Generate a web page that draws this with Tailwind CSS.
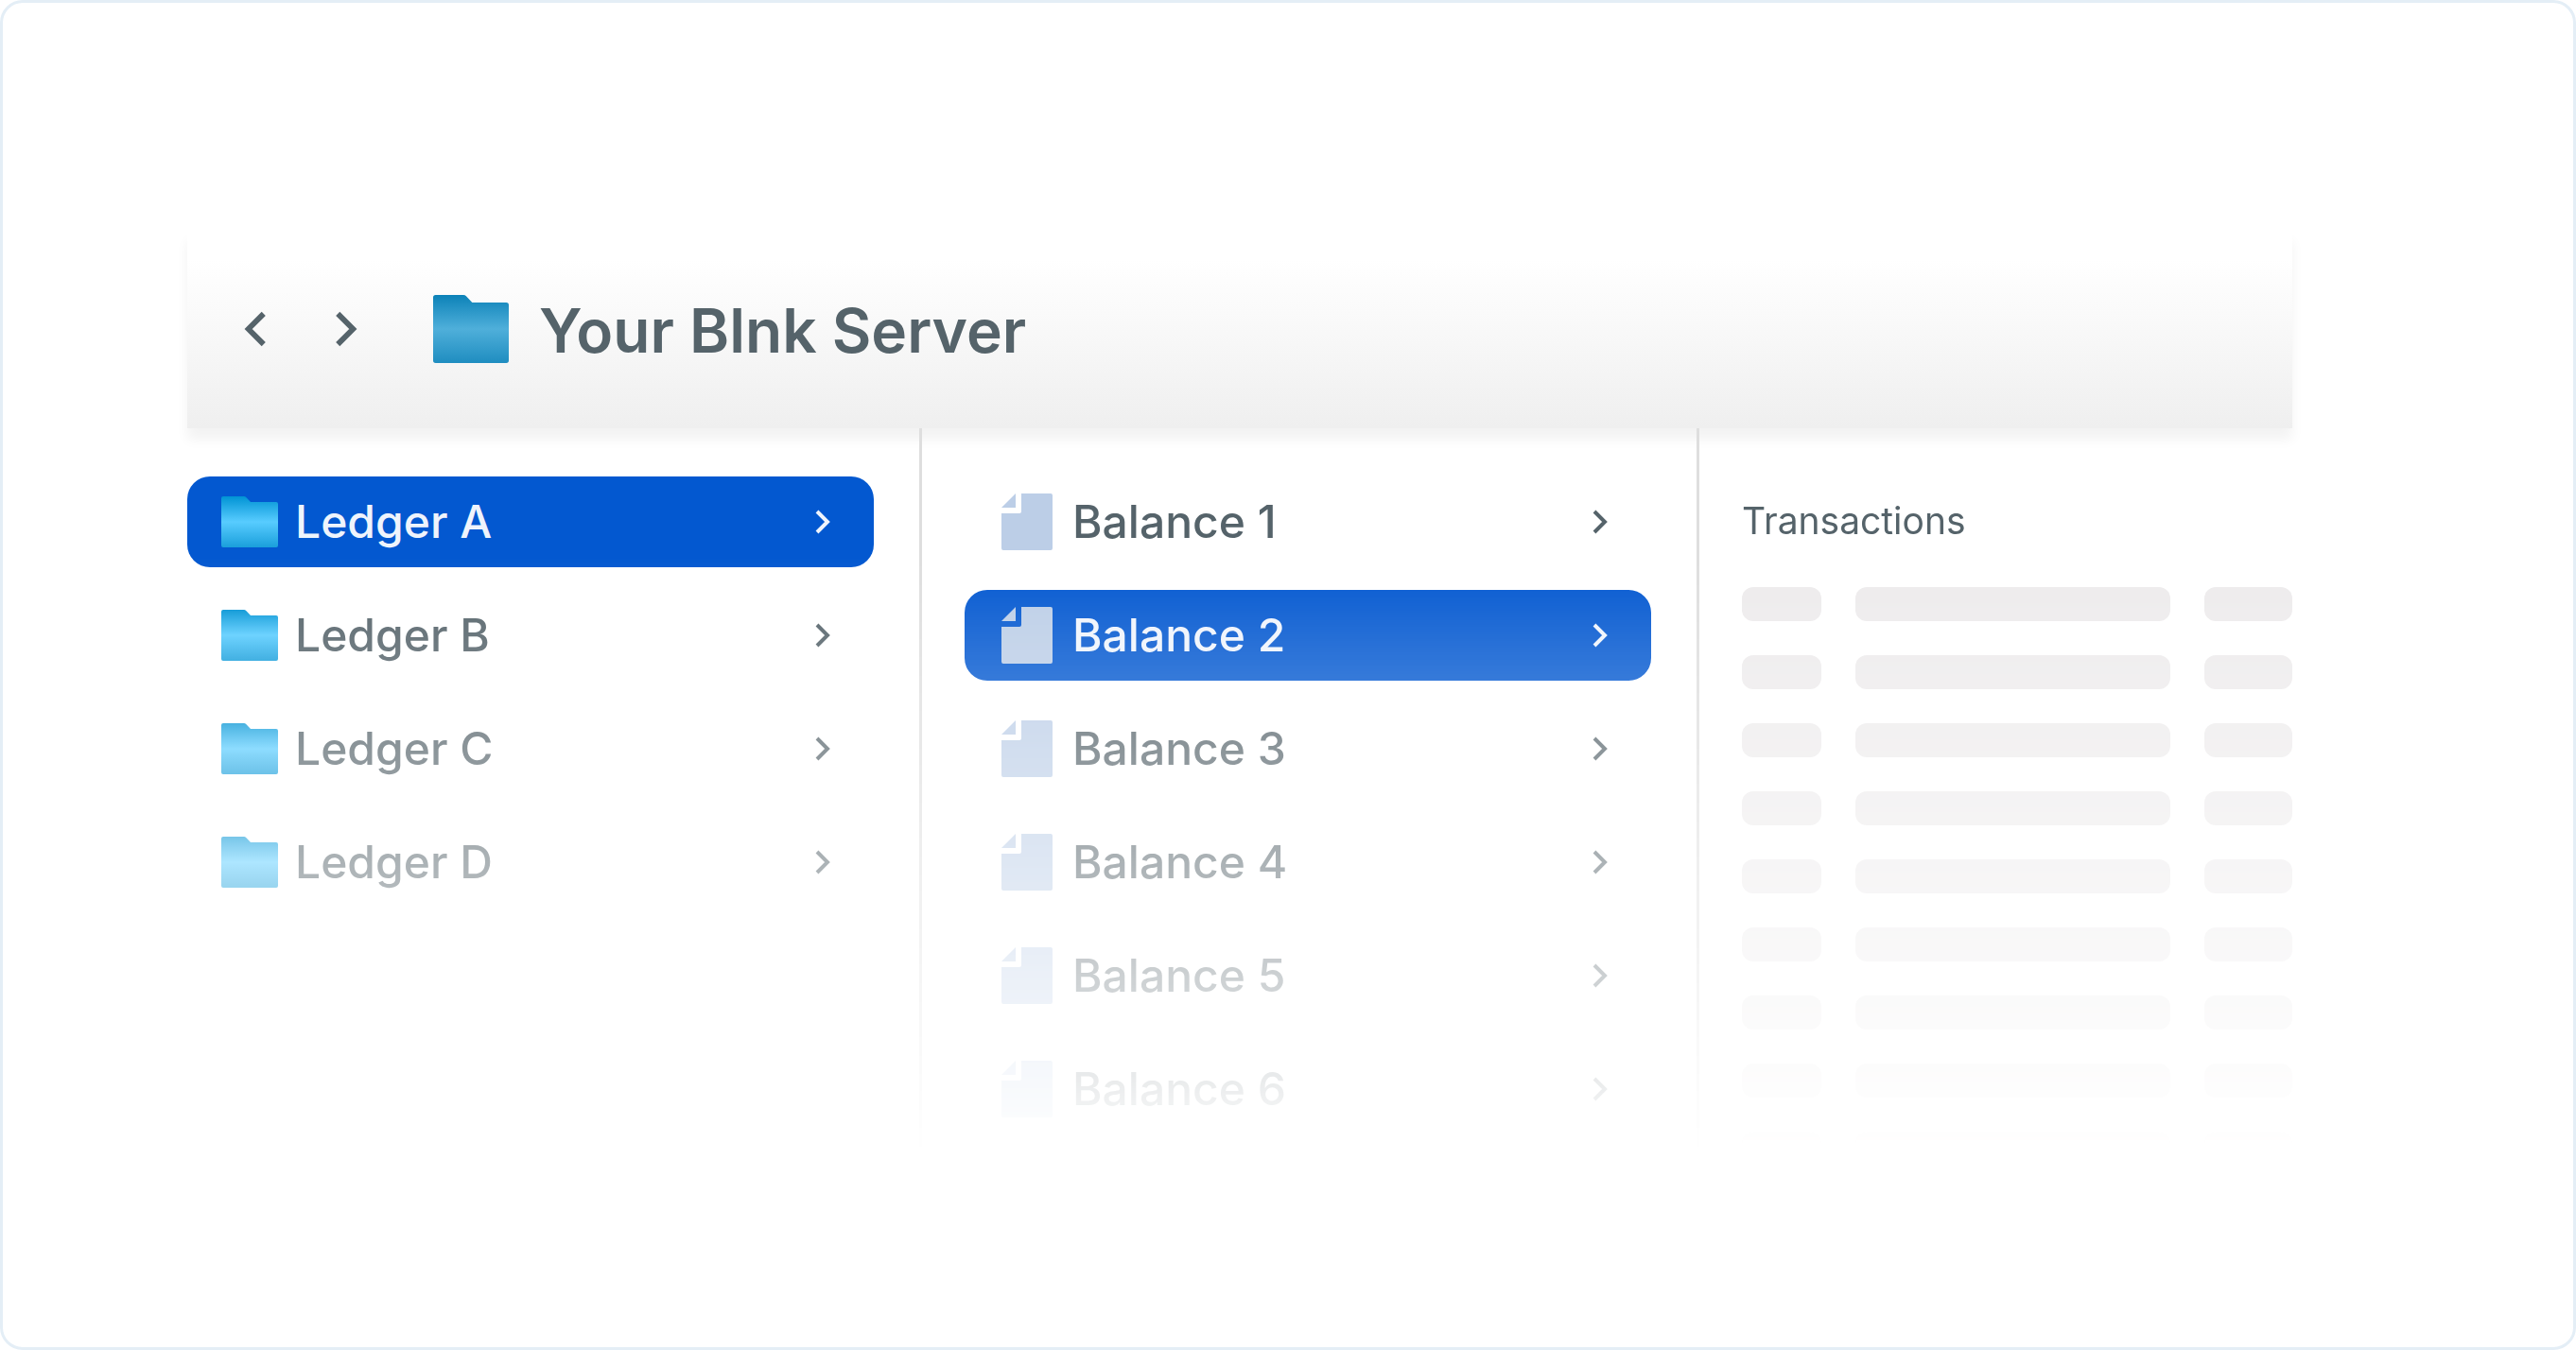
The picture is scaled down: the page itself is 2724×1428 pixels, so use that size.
<!DOCTYPE html>
<html lang="en">
<head>
<meta charset="utf-8">
<meta name="viewport" content="width=device-width, initial-scale=1">
<title>Your Blnk Server</title>
<script src="https://cdn.jsdelivr.net/npm/@tailwindcss/browser@4"></script>
</head>
<body class="bg-white font-[Inter,sans-serif] text-[#55636a]">
<svg class="absolute size-0" aria-hidden="true">
  <defs>
    <linearGradient id="folder-fill" x1="0" y1="0" x2="0" y2="1">
      <stop offset="0" stop-color="#0093d4"/>
      <stop offset="0.5" stop-color="#58ccff"/>
      <stop offset="1" stop-color="#1a9fdb"/>
    </linearGradient>
    <linearGradient id="folder-fill-dim" x1="0" y1="0" x2="0" y2="1">
      <stop offset="0" stop-color="#0c82b8"/>
      <stop offset="0.5" stop-color="#4fafda"/>
      <stop offset="1" stop-color="#1f8dc0"/>
    </linearGradient>
  </defs>
  <symbol id="folder" viewBox="0 0 60 54">
    <path d="M2 0H24Q25.300 0 26.200 1L31 6H58Q60 6 60 8V52Q60 54 58 54H2Q0 54 0 52V2Q0 0 2 0Z"/>
  </symbol>
  <symbol id="file" viewBox="0 0 54 60">
    <path d="M15 0V15H0Z"/>
    <path d="M21 0H52Q54 0 54 2V58Q54 60 52 60H2Q0 60 0 58V21H19Q21 21 21 19Z"/>
  </symbol>
  <symbol id="chevron" viewBox="0 0 16 26">
    <path d="M2 2L13 13L2 24" fill="none" stroke="currentColor" stroke-width="4"/>
  </symbol>
</svg>

<main class="min-h-screen rounded-3xl border-3 border-[#e4eef6] bg-white pt-60 pr-[297px] pb-40 pl-[195px]">
  <header class="flex h-[210px] items-center bg-linear-to-b from-white from-15% to-[#efefef] pl-15 shadow-[0_12px_12px_0_rgb(0_0_0/0.05)]">
    <nav class="flex gap-18" aria-label="History">
      <button type="button" aria-label="Back"><svg class="h-[38px] w-6 rotate-180"><use href="#chevron"/></svg></button>
      <button type="button" aria-label="Forward"><svg class="h-[38px] w-6"><use href="#chevron"/></svg></button>
    </nav>
    <svg class="ml-20 h-18 w-20" fill="url(#folder-fill-dim)" aria-hidden="true"><use href="#folder"/></svg>
    <h1 class="ml-8 pt-1 text-[64px] leading-20 font-semibold">Your Blnk Server</h1>
  </header>

  <div class="grid grid-cols-[777fr_822fr_627fr] [mask-image:linear-gradient(to_bottom,#000_137px,transparent_769px)]">
    <section class="border-r-3 border-[#dedede] pt-[51px] pr-12 pb-12" aria-label="Ledgers">
      <ul class="flex flex-col gap-6 text-[48px] leading-14 font-medium">
        <li><a href="#" aria-current="true" class="flex h-24 items-center rounded-3xl bg-[#0358d0] px-9 text-[#eff4fc]"><svg class="h-[54px] w-15" fill="url(#folder-fill)"><use href="#folder"/></svg><span class="ml-[18px] flex-1">Ledger A</span><svg class="mr-[10px] h-[26px] w-4"><use href="#chevron"/></svg></a></li>
        <li><a href="#" class="flex h-24 items-center rounded-3xl px-9"><svg class="h-[54px] w-15" fill="url(#folder-fill)"><use href="#folder"/></svg><span class="ml-[18px] flex-1">Ledger B</span><svg class="mr-[10px] h-[26px] w-4"><use href="#chevron"/></svg></a></li>
        <li><a href="#" class="flex h-24 items-center rounded-3xl px-9"><svg class="h-[54px] w-15" fill="url(#folder-fill)"><use href="#folder"/></svg><span class="ml-[18px] flex-1">Ledger C</span><svg class="mr-[10px] h-[26px] w-4"><use href="#chevron"/></svg></a></li>
        <li><a href="#" class="flex h-24 items-center rounded-3xl px-9"><svg class="h-[54px] w-15" fill="url(#folder-fill)"><use href="#folder"/></svg><span class="ml-[18px] flex-1">Ledger D</span><svg class="mr-[10px] h-[26px] w-4"><use href="#chevron"/></svg></a></li>
      </ul>
    </section>

    <section class="border-r-3 border-[#dedede] pt-[51px] pr-12 pl-[45px]" aria-label="Balances">
      <ul class="flex flex-col gap-6 text-[48px] leading-14 font-medium">
        <li><a href="#" class="flex h-24 items-center rounded-3xl px-9"><svg class="size-15 fill-[#bccee7]"><use href="#file"/></svg><span class="ml-[18px] flex-1">Balance 1</span><svg class="mr-[10px] h-[26px] w-4"><use href="#chevron"/></svg></a></li>
        <li><a href="#" aria-current="true" class="flex h-24 items-center rounded-3xl bg-[#0358d0] px-9 text-[#eff4fc]"><svg class="size-15 fill-[#bccee7]"><use href="#file"/></svg><span class="ml-[18px] flex-1">Balance 2</span><svg class="mr-[10px] h-[26px] w-4"><use href="#chevron"/></svg></a></li>
        <li><a href="#" class="flex h-24 items-center rounded-3xl px-9"><svg class="size-15 fill-[#bccee7]"><use href="#file"/></svg><span class="ml-[18px] flex-1">Balance 3</span><svg class="mr-[10px] h-[26px] w-4"><use href="#chevron"/></svg></a></li>
        <li><a href="#" class="flex h-24 items-center rounded-3xl px-9"><svg class="size-15 fill-[#bccee7]"><use href="#file"/></svg><span class="ml-[18px] flex-1">Balance 4</span><svg class="mr-[10px] h-[26px] w-4"><use href="#chevron"/></svg></a></li>
        <li><a href="#" class="flex h-24 items-center rounded-3xl px-9"><svg class="size-15 fill-[#bccee7]"><use href="#file"/></svg><span class="ml-[18px] flex-1">Balance 5</span><svg class="mr-[10px] h-[26px] w-4"><use href="#chevron"/></svg></a></li>
        <li><a href="#" class="flex h-24 items-center rounded-3xl px-9"><svg class="size-15 fill-[#bccee7]"><use href="#file"/></svg><span class="ml-[18px] flex-1">Balance 6</span><svg class="mr-[10px] h-[26px] w-4"><use href="#chevron"/></svg></a></li>
      </ul>
    </section>

    <section class="pt-[74px] pl-[45px]" aria-labelledby="transactions">
      <h2 id="transactions" class="text-[39px] leading-12">Transactions</h2>
      <div class="mt-[46px] grid auto-rows-[36px] grid-cols-[84fr_333fr_93fr] gap-9 *:rounded-xl *:bg-[#edebec]" aria-hidden="true">
        <i></i><i></i><i></i>
        <i></i><i></i><i></i>
        <i></i><i></i><i></i>
        <i></i><i></i><i></i>
        <i></i><i></i><i></i>
        <i></i><i></i><i></i>
        <i></i><i></i><i></i>
        <i></i><i></i><i></i>
        <i></i><i></i><i></i>
      </div>
    </section>
  </div>
</main>
</body>
</html>
